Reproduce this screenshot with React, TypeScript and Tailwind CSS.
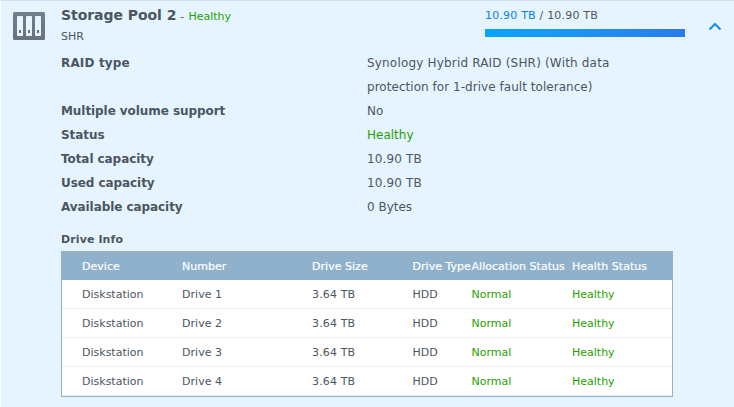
import type { ReactNode } from "react";

const details: { label: string; value: ReactNode; ok?: boolean }[] = [
  {
    label: "RAID type",
    value: (
      <>
        <span className="tracking-[0.18px]">Synology Hybrid RAID (SHR) (With data</span>
        <br />
        <span className="tracking-[0.04px]">protection for 1-drive fault tolerance)</span>
      </>
    ),
  },
  { label: "Multiple volume support", value: "No" },
  { label: "Status", value: "Healthy", ok: true },
  { label: "Total capacity", value: <span className="tracking-[0.15px]">10.90 TB</span> },
  { label: "Used capacity", value: <span className="tracking-[0.15px]">10.90 TB</span> },
  { label: "Available capacity", value: "0 Bytes" },
];

const drives = ["Drive 1", "Drive 2", "Drive 3", "Drive 4"];

function PoolIcon() {
  return (
    <svg width="32" height="28" viewBox="0 0 32 28" className="shrink-0">
      <defs>
        <linearGradient id="pool" x1="0" y1="0" x2="0" y2="1">
          <stop offset="0" stopColor="#747d8a" />
          <stop offset="1" stopColor="#69727f" />
        </linearGradient>
      </defs>
      <rect width="32" height="28" rx="1.5" fill="url(#pool)" />
      {[4, 13, 22].map((x) => (
        <g key={x}>
          <rect x={x} y="4" width="6" height="20" rx="0.8" fill="#e6f4ff" />
          <rect x={x + 2} y="18" width="2" height="3" fill="#69727f" />
        </g>
      ))}
    </svg>
  );
}

function Header() {
  return (
    <header className="flex h-[50px] pl-3">
      <div className="pt-[11px]">
        <PoolIcon />
      </div>
      <div className="ml-4 w-[424px]">
        <div className="flex h-7 items-baseline whitespace-pre pt-1 leading-5">
          <span className="text-[14px] font-bold tracking-[-0.05px]">Storage Pool 2</span>
          <span className="text-[11px] tracking-[0.35px]"> - </span>
          <span className="text-[11px] text-[#1fa100]">Healthy</span>
        </div>
        <div className="text-[11px] leading-4">SHR</div>
      </div>
      <div className="w-[200px] pt-[7px]">
        <div className="text-[11px] leading-4 tracking-[0.2px]">
          <span className="text-[#057feb]">10.90 TB</span> / 10.90 TB
        </div>
        <div className="mt-[5px] h-2 bg-linear-to-r from-[#00a6ff] to-[#2b7be8]" />
      </div>
      <svg width="14" height="9" viewBox="0 0 14 9" className="ml-[23px] mt-[21px]" fill="none" stroke="#108fe9" strokeWidth="2">
        <path d="M1.5 7.5 L7 2 L12.5 7.5" />
      </svg>
    </header>
  );
}

const grid = "grid grid-cols-[100px_130px_100.5px_59px_100.5px_100px] items-center pl-5 pt-0.5 whitespace-nowrap";

export default function App() {
  return (
    <div className="h-[407px] w-[734px] overflow-hidden bg-white pl-px font-['DejaVu_Sans','Verdana',sans-serif] text-[#4b5661]">
      <main className="h-full border-t border-[#d0dfed] bg-[#e6f4ff]">
        <Header />
        <dl className="ml-[60px] text-[12px] leading-6">
          {details.map((d) => (
            <div key={d.label} className="flex whitespace-nowrap">
              <dt className={`w-[306px] font-bold ${d.label === "RAID type" ? "tracking-[0.15px]" : "tracking-[-0.07px]"}`}>{d.label}</dt>
              <dd className={d.ok ? "text-[#1fa100]" : ""}>{d.value}</dd>
            </div>
          ))}
        </dl>
        <h2 className="ml-[60px] mt-[13px] h-[19px] text-[11px] leading-4 font-bold tracking-[0.1px]">Drive Info</h2>
        <section className="ml-[60px] w-[612px] border border-[#90b1cc] bg-white text-[11px] leading-4">
          <div className={`${grid} h-7 bg-[#90b1cc] tracking-[0.03px] text-white [-webkit-text-stroke:0.2px_white]`}>
            <span>Device</span>
            <span>Number</span>
            <span>Drive Size</span>
            <span>Drive Type</span>
            <span>Allocation Status</span>
            <span>Health Status</span>
          </div>
          {drives.map((name) => (
            <div key={name} className={`${grid} h-[29px] border-b border-[#ebf0f4]`}>
              <span>Diskstation</span>
              <span className="tracking-[0.05px]">{name}</span>
              <span className="tracking-[0.15px]">3.64 TB</span>
              <span>HDD</span>
              <span className="text-[#1fa100]">Normal</span>
              <span className="text-[#1fa100]">Healthy</span>
            </div>
          ))}
        </section>
      </main>
    </div>
  );
}
